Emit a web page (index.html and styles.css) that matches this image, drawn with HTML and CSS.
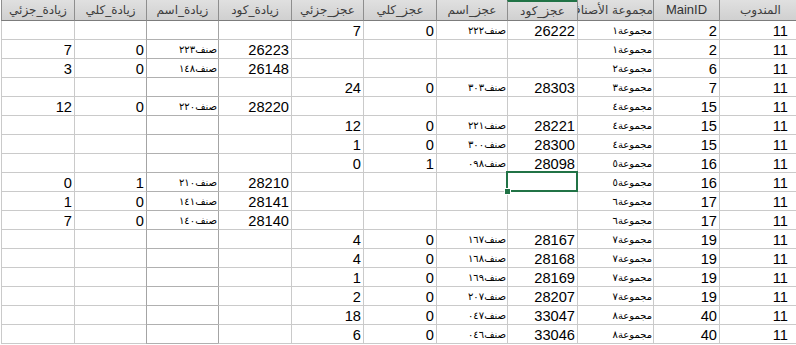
FILE: index.html
```html
<!DOCTYPE html>
<html lang="ar">
<head>
<meta charset="utf-8">
<title>Sheet</title>
<link rel="stylesheet" href="styles.css">
</head>
<body>
<div class="sheet">
  <div class="h">المندوب</div><div class="h latin">MainID</div><div class="h">مجموعة الأصناف</div><div class="h active">عجز_كود</div><div class="h">عجز_اسم</div><div class="h">عجز_كلي</div><div class="h">عجز_جزئي</div><div class="h">زيادة_كود</div><div class="h">زيادة_اسم</div><div class="h">زيادة_كلي</div><div class="h">زيادة_جزئي</div>

  <div class="c n">11</div><div class="c n">2</div><div class="c t">مجموعة١</div><div class="c n">26222</div><div class="c t">صنف٢٢٢</div><div class="c n">0</div><div class="c n">7</div><div class="c"></div><div class="c"></div><div class="c"></div><div class="c"></div>
  <div class="c n">11</div><div class="c n">2</div><div class="c t">مجموعة١</div><div class="c"></div><div class="c"></div><div class="c"></div><div class="c"></div><div class="c n">26223</div><div class="c t">صنف٢٢٣</div><div class="c n">0</div><div class="c n">7</div>
  <div class="c n">11</div><div class="c n">6</div><div class="c t">مجموعة٢</div><div class="c"></div><div class="c"></div><div class="c"></div><div class="c"></div><div class="c n">26148</div><div class="c t">صنف١٤٨</div><div class="c n">0</div><div class="c n">3</div>
  <div class="c n">11</div><div class="c n">7</div><div class="c t">مجموعة٣</div><div class="c n">28303</div><div class="c t">صنف٣٠٣</div><div class="c n">0</div><div class="c n">24</div><div class="c"></div><div class="c"></div><div class="c"></div><div class="c"></div>
  <div class="c n">11</div><div class="c n">15</div><div class="c t">مجموعة٤</div><div class="c"></div><div class="c"></div><div class="c"></div><div class="c"></div><div class="c n">28220</div><div class="c t">صنف٢٢٠</div><div class="c n">0</div><div class="c n">12</div>
  <div class="c n">11</div><div class="c n">15</div><div class="c t">مجموعة٤</div><div class="c n">28221</div><div class="c t">صنف٢٢١</div><div class="c n">0</div><div class="c n">12</div><div class="c"></div><div class="c"></div><div class="c"></div><div class="c"></div>
  <div class="c n">11</div><div class="c n">15</div><div class="c t">مجموعة٤</div><div class="c n">28300</div><div class="c t">صنف٣٠٠</div><div class="c n">0</div><div class="c n">1</div><div class="c"></div><div class="c"></div><div class="c"></div><div class="c"></div>
  <div class="c n">11</div><div class="c n">16</div><div class="c t">مجموعة٥</div><div class="c n">28098</div><div class="c t">صنف٠٩٨</div><div class="c n">1</div><div class="c n">0</div><div class="c"></div><div class="c"></div><div class="c"></div><div class="c"></div>
  <div class="c n">11</div><div class="c n">16</div><div class="c t">مجموعة٥</div><div class="c sel"><span class="handle"></span></div><div class="c"></div><div class="c"></div><div class="c"></div><div class="c n">28210</div><div class="c t">صنف٢١٠</div><div class="c n">1</div><div class="c n">0</div>
  <div class="c n">11</div><div class="c n">17</div><div class="c t">مجموعة٦</div><div class="c"></div><div class="c"></div><div class="c"></div><div class="c"></div><div class="c n">28141</div><div class="c t">صنف١٤١</div><div class="c n">0</div><div class="c n">1</div>
  <div class="c n">11</div><div class="c n">17</div><div class="c t">مجموعة٦</div><div class="c"></div><div class="c"></div><div class="c"></div><div class="c"></div><div class="c n">28140</div><div class="c t">صنف١٤٠</div><div class="c n">0</div><div class="c n">7</div>
  <div class="c n">11</div><div class="c n">19</div><div class="c t">مجموعة٧</div><div class="c n">28167</div><div class="c t">صنف١٦٧</div><div class="c n">0</div><div class="c n">4</div><div class="c"></div><div class="c"></div><div class="c"></div><div class="c"></div>
  <div class="c n">11</div><div class="c n">19</div><div class="c t">مجموعة٧</div><div class="c n">28168</div><div class="c t">صنف١٦٨</div><div class="c n">0</div><div class="c n">4</div><div class="c"></div><div class="c"></div><div class="c"></div><div class="c"></div>
  <div class="c n">11</div><div class="c n">19</div><div class="c t">مجموعة٧</div><div class="c n">28169</div><div class="c t">صنف١٦٩</div><div class="c n">0</div><div class="c n">1</div><div class="c"></div><div class="c"></div><div class="c"></div><div class="c"></div>
  <div class="c n">11</div><div class="c n">19</div><div class="c t">مجموعة٧</div><div class="c n">28207</div><div class="c t">صنف٢٠٧</div><div class="c n">0</div><div class="c n">2</div><div class="c"></div><div class="c"></div><div class="c"></div><div class="c"></div>
  <div class="c n">11</div><div class="c n">40</div><div class="c t">مجموعة٨</div><div class="c n">33047</div><div class="c t">صنف٠٤٧</div><div class="c n">0</div><div class="c n">18</div><div class="c"></div><div class="c"></div><div class="c"></div><div class="c"></div>
  <div class="c n">11</div><div class="c n">40</div><div class="c t">مجموعة٨</div><div class="c n">33046</div><div class="c t">صنف٠٤٦</div><div class="c n">0</div><div class="c n">6</div><div class="c"></div><div class="c"></div><div class="c"></div><div class="c"></div>
</div>
</body>
</html>
```

FILE: styles.css
```css
html, body {
  margin: 0;
  padding: 0;
  background: #ffffff;
  overflow: hidden;
}

body {
  font-family: "Liberation Sans", "DejaVu Sans", sans-serif;
  color: #000;
}

.sheet {
  direction: rtl;
  display: grid;
  width: 800px;
  margin-left: 1px;
  grid-template-columns: 82px 66px 76px 70px 71px 73px 72px 73px 72px 72px 73px;
  grid-template-rows: 21px repeat(17, 19px);
}

.h {
  box-sizing: border-box;
  border-left: 1px solid #8e8e8e;
  border-bottom: 1px solid #7c7c7c;
  background: linear-gradient(#e0e0e0, #d0d0d0);
  color: #3c3c3c;
  font-family: "DejaVu Sans", sans-serif;
  font-size: 12px;
  line-height: 20px;
  text-align: center;
  white-space: nowrap;
  overflow: hidden;
}

.h.latin {
  font-family: "Liberation Sans", sans-serif;
  font-size: 13px;
  color: #333;
}

.h.active {
  border-top: 2px solid #217346;
  line-height: 18px;
}

.c {
  position: relative;
  box-sizing: border-box;
  border-left: 1px solid #cacaca;
  border-bottom: 1px solid #cacaca;
  padding: 1px 2px 0 2px;
  line-height: 18px;
  white-space: nowrap;
  overflow: hidden;
}

.c:nth-child(11n+1) {
  padding-right: 13px;
}

.c:nth-child(11n+8) {
  border-left-color: #a4a4a4;
}

.c:nth-child(11n+9) {
  border-left-color: #a4a4a4;
  border-bottom-color: #b0b0b0;
}

.n {
  font-size: 14.67px;
  text-align: right;
}

.t {
  font-family: "DejaVu Sans", sans-serif;
  font-size: 10px;
  text-align: right;
  padding-right: 1px;
}

.sel {
  overflow: visible;
}

.sel::after {
  content: "";
  position: absolute;
  left: -2px;
  right: -1px;
  top: -2px;
  bottom: -1px;
  border: 2px solid #217346;
}

.handle {
  position: absolute;
  left: -4px;
  bottom: -4px;
  width: 5px;
  height: 5px;
  background: #217346;
  border: 1px solid #fff;
  z-index: 2;
}
```
